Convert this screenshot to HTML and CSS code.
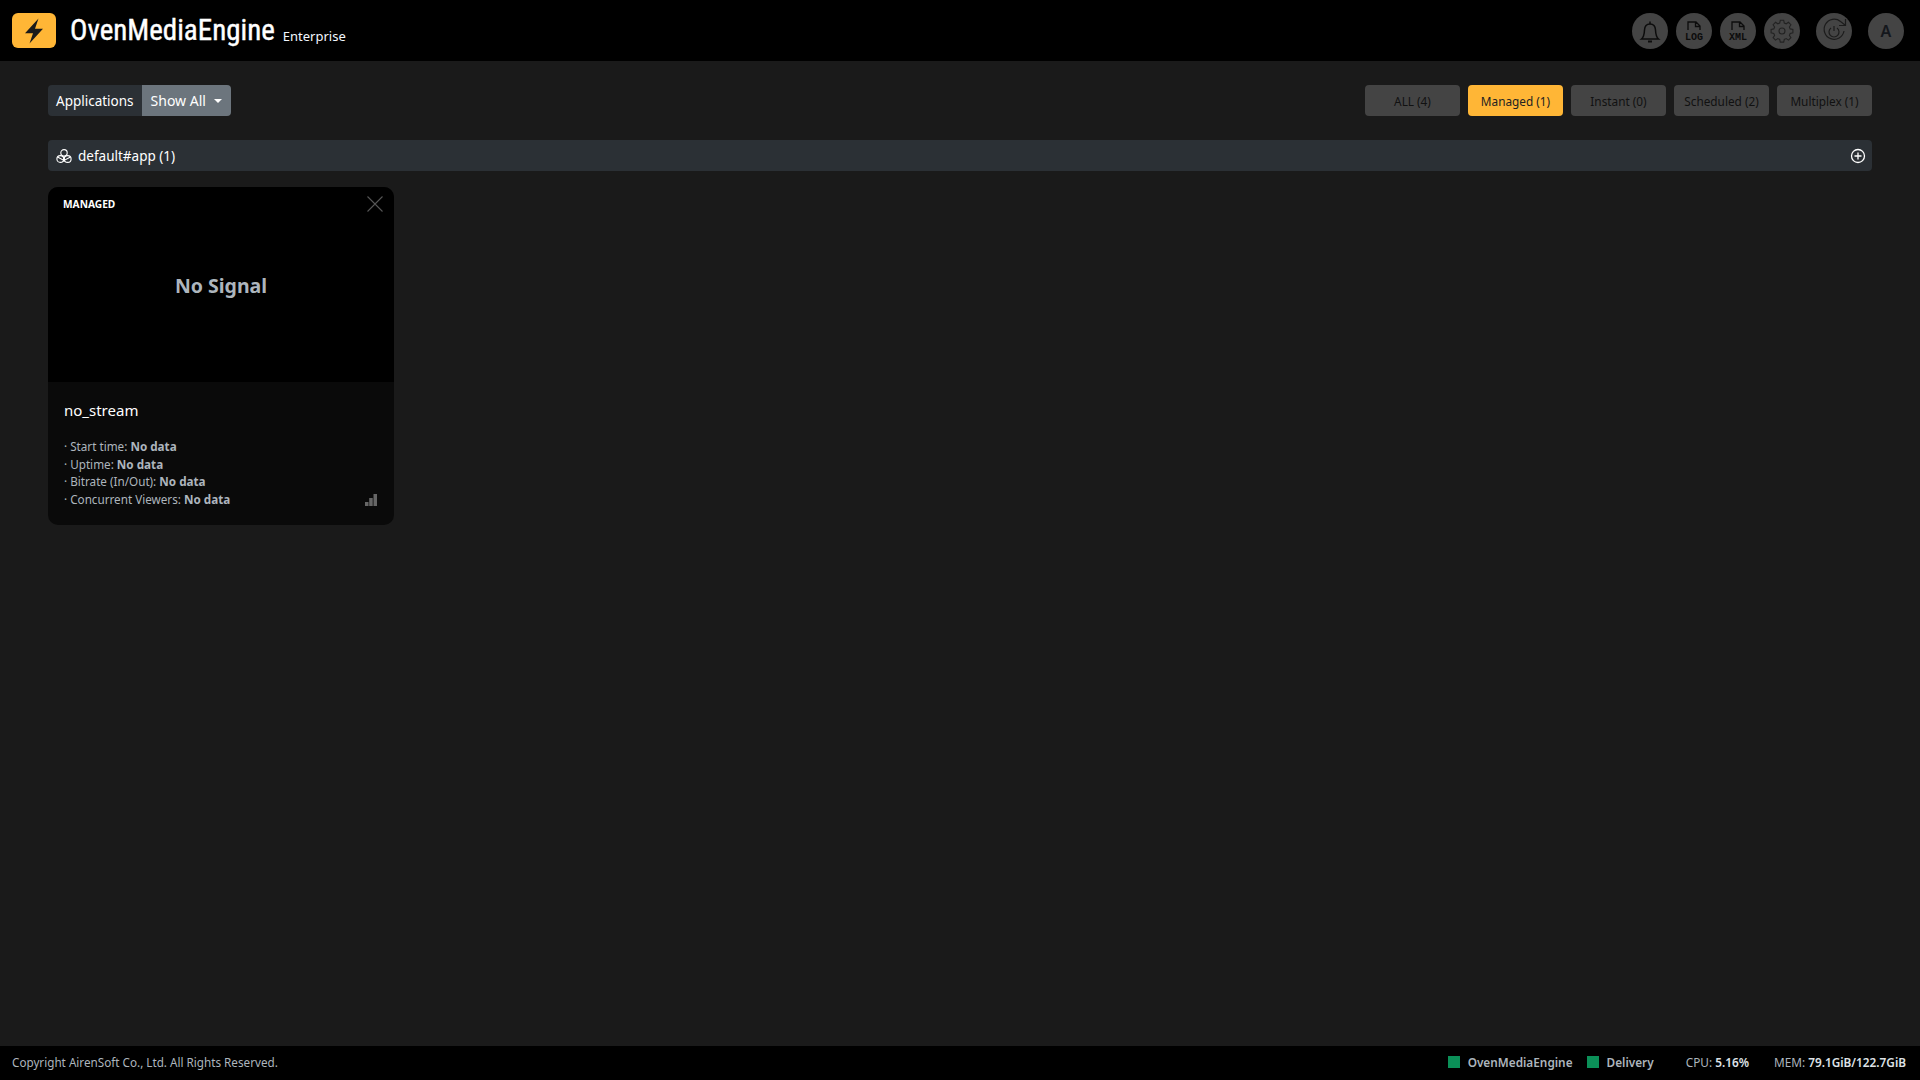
FILE: index.html
```html
<!DOCTYPE html>
<html lang="en">
<head>
<meta charset="utf-8">
<title>OvenMediaEngine Enterprise</title>
<link rel="stylesheet" href="styles.css">
</head>
<body>
<header class="topbar">
  <div class="brand">
    <span class="logo"><svg viewBox="0 0 44 36" width="44" height="36"><path d="M26.5 5.5 13 20.2h8L17.5 30.5 31 15.8h-8z" fill="#1a1a1a"/></svg></span>
    <span class="brand-name">OvenMediaEngine</span>
    <span class="brand-edition">Enterprise</span>
  </div>
  <nav class="tools">
    <span class="tool"><svg viewBox="0 0 36 36" width="36" height="36" fill="none" stroke="#0c0c0c" stroke-width="1.500"><path d="M9.500 26c2.500-2 2.800-4.500 3-9 .2-4 2-6 5.500-6s5.300 2 5.500 6c.2 4.500.5 7 3 9z"/><path d="M18 8.500V11"/><path d="M16 28.500h4" stroke-width="2"/></svg></span>
    <span class="tool"><svg viewBox="0 0 36 36" width="36" height="36" fill="none" stroke="#0c0c0c" stroke-width="1.300"><path d="M12 17V9h8l4 4v4M19.500 9v4.500H24"/><text x="18" y="27" class="tool-text">LOG</text></svg></span>
    <span class="tool"><svg viewBox="0 0 36 36" width="36" height="36" fill="none" stroke="#0c0c0c" stroke-width="1.300"><path d="M12 17V9h8l4 4v4M19.500 9v4.500H24"/><text x="18" y="27" class="tool-text">XML</text></svg></span>
    <span class="tool"><svg viewBox="0 0 36 36" width="36" height="36" fill="none" stroke="#222" stroke-width="1.100"><circle cx="18" cy="18" r="3"/><path d="M16.300 8.500h3.400l.6 2.700 1.900.8 2.300-1.500 2.400 2.400-1.500 2.300.8 1.900 2.700.6v3.400l-2.700.6-.8 1.900 1.500 2.300-2.400 2.400-2.300-1.500-1.900.8-.6 2.700h-3.400l-.6-2.700-1.900-.8-2.300 1.500-2.400-2.400 1.500-2.300-.8-1.900-2.700-.6v-3.400l2.700-.6.8-1.900-1.500-2.300 2.400-2.400 2.300 1.500 1.900-.8z" transform="translate(0 -1.200)"/></svg></span>
    <span class="tool tool-gap"><svg viewBox="0 0 36 36" width="36" height="36" fill="none" stroke="#1c1c1c" stroke-width="1.200"><path d="M28 18a10 10 0 1 1-3.500-9.500L29 12"/><path d="M29.500 6v6.500H23"/><path d="M15 15a5 5 0 1 0 6 0M18 13v5"/></svg></span>
    <span class="tool tool-gap tool-letter">A</span>
  </nav>
</header>

<main class="content">
  <div class="toolbar">
    <div class="app-select">
      <span class="app-label">Applications</span>
      <span class="app-value">Show All<i class="caret"></i></span>
    </div>
    <div class="filters">
      <span class="filter">ALL (4)</span>
      <span class="filter filter-active">Managed (1)</span>
      <span class="filter">Instant (0)</span>
      <span class="filter">Scheduled (2)</span>
      <span class="filter">Multiplex (1)</span>
    </div>
  </div>

  <div class="app-bar">
    <span class="app-bar-title">
      <svg viewBox="0 0 16 16" width="16" height="16" fill="none" stroke="#fff" stroke-width="1.100"><circle cx="8" cy="4.800" r="3.200"/><circle cx="4.300" cy="11" r="3.400"/><circle cx="11.700" cy="11" r="3.400"/><path d="M8 8v6M1.500 9l6.500 3.500L14.500 9"/></svg>
      default#app (1)
    </span>
    <svg viewBox="0 0 16 16" width="16" height="16" fill="none" stroke="#fff" stroke-width="1.300"><circle cx="8" cy="8" r="6.500"/><path d="M8 4.500v7M4.500 8h7"/></svg>
  </div>

  <article class="card">
    <div class="card-media">
      <span class="card-tag">MANAGED</span>
      <svg class="card-close" viewBox="0 0 16 16" width="16" height="16" fill="none" stroke="#555" stroke-width="1.100"><path d="M.5.500l15 15M15.500.500l-15 15"/></svg>
      <span class="no-signal">No Signal</span>
    </div>
    <div class="card-body">
      <h2 class="card-title">no_stream</h2>
      <ul class="card-info">
        <li>· Start time: <b>No data</b></li>
        <li>· Uptime: <b>No data</b></li>
        <li>· Bitrate (In/Out): <b>No data</b></li>
        <li>· Concurrent Viewers: <b>No data</b></li>
      </ul>
      <svg class="card-stats" viewBox="0 0 12 12" width="12" height="12" fill="#666"><rect x="0" y="8" width="3.500" height="4"/><rect x="4.200" y="4" width="3.500" height="8"/><rect x="8.500" y="0" width="3.500" height="12"/></svg>
    </div>
  </article>
</main>

<footer class="footer">
  <span class="copyright">Copyright AirenSoft Co., Ltd. All Rights Reserved.</span>
  <div class="status">
    <span class="service"><i class="dot"></i>OvenMediaEngine</span>
    <span class="service"><i class="dot"></i>Delivery</span>
    <span class="metric metric-cpu">CPU: <b>5.16%</b></span>
    <span class="metric">MEM: <b>79.1GiB/122.7GiB</b></span>
  </div>
</footer>
</body>
</html>
```
FILE: styles.css
```css
* { box-sizing: border-box; }
html, body { height: 100%; }
body {
  margin: 0;
  display: flex;
  flex-direction: column;
  background: #1a1a1a;
  color: #fff;
  font-family: "Noto Sans", "Open Sans", sans-serif;
  font-size: 14px;
}
.topbar {
  flex: 0 0 61px;
  background: #000;
  display: flex;
  align-items: center;
  justify-content: space-between;
  padding: 0 16px 0 12px;
}
.brand { display: flex; align-items: center; }
.logo {
  width: 44px;
  height: 35px;
  margin-top: -1px;
  border-radius: 6px;
  background: #ffb636;
  display: block;
  overflow: hidden;
}
.logo svg { display: block; }
.brand-name {
  margin-left: 14px;
  font-family: "Liberation Sans Narrow", "Roboto Condensed", "Roboto", sans-serif;
  font-size: 29px;
  font-weight: 400;
  line-height: 1;
  -webkit-text-stroke: 0.4px #fff;
}
.brand-edition { margin-left: 8px; margin-top: 10px; font-size: 13px; line-height: 18px; color: #f2f8ff; }
.tools { display: flex; gap: 8px; }
.tool {
  width: 36px;
  height: 36px;
  border-radius: 50%;
  background: #444;
  display: flex;
  align-items: center;
  justify-content: center;
}
.tool-gap { margin-left: 8px; }
.tool-letter { font-size: 16px; font-weight: 600; color: #14171c; }
.tool-text {
  font-family: "Liberation Mono", monospace;
  font-size: 10px;
  font-weight: 700;
  text-anchor: middle;
  fill: #0c0c0c;
  stroke: none;
}
.content { flex: 1 1 auto; padding: 24px 48px 0; }
.toolbar { display: flex; justify-content: space-between; height: 31px; }
.app-select { display: flex; border-radius: 4px; overflow: hidden; font-size: 13.500px; line-height: 33px; }
.app-label { background: #2b3035; padding: 0 8px; }
.app-value { background: #6c757d; padding: 0 8px 0 9px; width: 89px; font-size: 14px; line-height: 32px; white-space: nowrap; color: #fff; }
.caret {
  display: inline-block;
  margin-left: 8px;
  vertical-align: 3px;
  border-top: 4px solid #fff;
  border-left: 4px solid transparent;
  border-right: 4px solid transparent;
}
.filters { display: flex; gap: 8px; }
.filter {
  width: 95px;
  background: #444;
  border-radius: 4px;
  color: #111;
  font-size: 11.800px;
  line-height: 32px;
  text-align: center;
  white-space: nowrap;
}
.filter-active { background: #ffb636; color: #222; }
.app-bar {
  margin-top: 24px;
  height: 31px;
  background: #2b3035;
  border-radius: 4px;
  display: flex;
  align-items: center;
  justify-content: space-between;
  padding: 0 6px 0 8px;
}
.app-bar-title { display: flex; align-items: center; gap: 6px; font-size: 13.500px; }
.card {
  margin-top: 16px;
  width: 346px;
  height: 338px;
  background: #0a0a0a;
  border-radius: 10px;
  overflow: hidden;
  display: flex;
  flex-direction: column;
}
.card-media {
  position: relative;
  flex: 0 0 195px;
  background: #000;
  display: flex;
  align-items: center;
  justify-content: center;
}
.card-tag { position: absolute; left: 15px; top: 9px; font-size: 10.200px; font-weight: 700; line-height: 16px; }
.card-close { position: absolute; right: 11px; top: 9px; }
.no-signal { margin-top: 2px; font-size: 19.500px; font-weight: 700; color: #adb5bd; }
.card-body { position: relative; flex: 1 1 auto; padding: 16px 16px 0; }
.card-title { margin: 0 0 16px; font-size: 15px; font-weight: 400; line-height: 24px; }
.card-info { margin: 0; padding: 0; list-style: none; font-size: 11.700px; line-height: 17.600px; color: #adb5bd; }
.card-stats { position: absolute; right: 17px; bottom: 19px; }
.footer {
  flex: 0 0 34px;
  background: #000;
  display: flex;
  align-items: center;
  justify-content: space-between;
  padding: 0 14px 2px 12px;
  font-size: 11.700px;
  color: #adb5bd;
}
.status { display: flex; align-items: center; font-size: 11.800px; }
.service { display: flex; align-items: center; margin-right: 14px; font-weight: 600; }
.dot { width: 12px; height: 12px; margin-right: 8px; background: #0b9058; }
.metric-cpu { margin: 0 25px 0 18px; }
.metric b { font-weight: 600; color: #dee2e6; }
```
